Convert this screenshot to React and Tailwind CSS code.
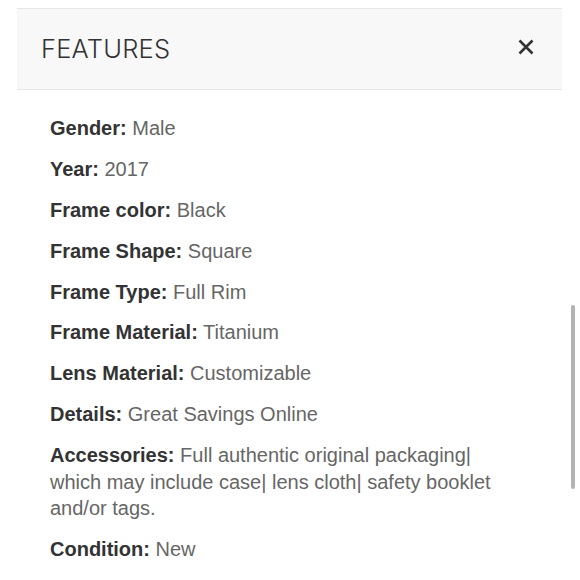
import React from "react";

const rows = [
  ["Gender:", "Male"],
  ["Year:", "2017"],
  ["Frame color:", "Black"],
  ["Frame Shape:", "Square"],
  ["Frame Type:", "Full Rim"],
  ["Frame Material:", "Titanium"],
  ["Lens Material:", "Customizable"],
  ["Details:", "Great Savings Online"],
  ["Accessories:", "Full authentic original packaging| which may include case| lens cloth| safety booklet and/or tags."],
  ["Condition:", "New"],
];

export default function App() {
  return (
    <div className="relative w-[580px] h-[580px] overflow-hidden bg-white">
      <div className="ml-[17px] mr-[18px] pt-[8px]">
        <div className="h-[82px] bg-[#f8f8f8] border-y border-[#e6e6e6] flex items-center justify-between pl-[24px] pr-[28px]">
          <span className="text-[25.5px] font-light text-[#333] tracking-[0.2px]" style={{ fontFamily: "Inter, 'Noto Sans', sans-serif" }}>FEATURES</span>
          <svg width="16" height="16" viewBox="0 0 16 16" className="mt-[-5px]">
            <path d="M1.5 1.5 L14.5 14.5 M14.5 1.5 L1.5 14.5" stroke="#333" strokeWidth="2.6" strokeLinecap="butt" />
          </svg>
        </div>
        <div className="pl-[33px] pr-[40px] pt-[25px] flex flex-col gap-[14.4px]" style={{ fontFamily: "'Liberation Sans', Arial, sans-serif" }}>
          {rows.map(([k, v]) => (
            <p key={k} className="text-[20px] leading-[26.5px] text-[#666]">
              <span className="font-bold text-[#333]">{k}</span> {v}
            </p>
          ))}
        </div>
      </div>
      <div className="absolute left-[571px] top-[305px] w-[4px] h-[184px] rounded-full bg-[#b3b3b3]" />
    </div>
  );
}
